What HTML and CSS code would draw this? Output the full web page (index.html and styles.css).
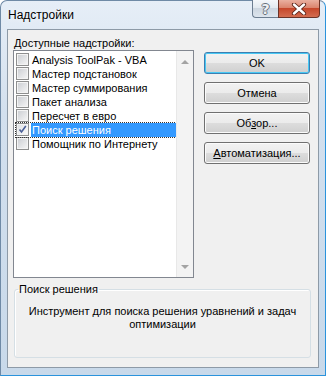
FILE: index.html
```html
<!DOCTYPE html>
<html lang="ru">
<head>
  <meta charset="UTF-8">
  <title>Надстройки</title>
  <link rel="stylesheet" href="styles.css">
</head>
<body>
  <div class="window">
    <div class="titlebar">
      <span class="title">Надстройки</span>
      <div class="caption-buttons">
        <span class="cap-btn help">?</span>
        <span class="cap-btn close">
          <svg width="16" height="12" viewBox="0 0 16 12">
            <path d="M3 1.5 L13 10.5 M13 1.5 L3 10.5" stroke="#5a2418" stroke-width="4.2" stroke-linecap="round"/>
            <path d="M3 1.5 L13 10.5 M13 1.5 L3 10.5" stroke="#fff" stroke-width="2.4" stroke-linecap="round"/>
          </svg>
        </span>
      </div>
    </div>

    <div class="client">
      <div class="main">
        <div class="addins">
          <div class="label"><u>Д</u>оступные надстройки:</div>
          <div class="listbox">
            <ul class="items">
              <li><span class="check"></span><span class="name">Analysis ToolPak - VBA</span></li>
              <li><span class="check"></span><span class="name">Мастер подстановок</span></li>
              <li><span class="check"></span><span class="name">Мастер суммирования</span></li>
              <li><span class="check"></span><span class="name">Пакет анализа</span></li>
              <li><span class="check"></span><span class="name">Пересчет в евро</span></li>
              <li class="selected"><span class="check checked">
                <svg width="9" height="9" viewBox="0 0 9 9"><path d="M1.5 4.5 L3.5 7 L7.8 1" fill="none" stroke="#4a5f97" stroke-width="1.6"/></svg>
              </span><span class="name">Поиск решения</span></li>
              <li><span class="check"></span><span class="name">Помощник по Интернету</span></li>
            </ul>
            <div class="scrollbar">
              <span class="arrow up"></span>
              <span class="arrow down"></span>
            </div>
          </div>
        </div>

        <div class="buttons">
          <button class="btn default">OK</button>
          <button class="btn">Отмена</button>
          <button class="btn">Об<u>з</u>ор...</button>
          <button class="btn"><u>А</u>втоматизация...</button>
        </div>
      </div>

      <fieldset class="group">
        <legend>Поиск решения</legend>
        <p class="description">Инструмент для поиска решения уравнений и задач оптимизации</p>
      </fieldset>
    </div>
  </div>
</body>
</html>
```

FILE: styles.css
```css
body { margin: 0; font-family: "Liberation Sans", Arial, sans-serif; font-size: 11px; color: #000; background: #fff; }

.window {
  width: 326px; height: 376px; box-sizing: border-box;
  display: flex; flex-direction: column;
  padding: 0 6px 7px 6px;
  border: 1px solid #6f8aa6; border-right-color: #2a93dc; border-bottom-color: #2a93dc;
  border-radius: 7px 7px 0 0;
  background: linear-gradient(#e6eef7, #d3e0ee 30%, #c8d9ea 100%);
}

.titlebar { height: 28px; display: flex; align-items: flex-start; }
.title { padding: 7px 0 0 1px; font-size: 12px; line-height: 14px; text-shadow: 0 0 6px #fff; }

.caption-buttons { margin-left: auto; margin-top: -1px; margin-right: -1px; display: flex; }
.cap-btn { height: 18px; box-sizing: border-box; display: flex; align-items: center; justify-content: center; }
.help {
  width: 26px; border: 1px solid #6c7d90; border-top: none; border-right: none; border-radius: 0 0 0 4px;
  background: linear-gradient(#f4f7fa, #e1e8ef 50%, #cdd6e0 50%, #dde5ee);
  font: bold 14px "DejaVu Sans", sans-serif; color: #eef1f4;
  text-shadow: 1px 0 #6a737d, -1px 0 #6a737d, 0 1px #6a737d, 0 -1px #6a737d;
}
.close {
  width: 42px; border: 1px solid #6b3327; border-top: none; border-radius: 0 0 4px 0;
  background: linear-gradient(#eab0a0, #d98068 50%, #c6472b 50%, #d36d50);
}

.client {
  flex: 1; display: flex; flex-direction: column;
  background: #f0f0f0; border: 1px solid #8d9aa7;
  padding: 6px 7px 8px 5px;
}

.main { display: flex; }
.label { margin-left: 1px; height: 14px; line-height: 14px; }

.listbox {
  width: 181px; height: 228px; box-sizing: border-box;
  border: 1px solid #828790; background: #fff; display: flex;
}
.items { list-style: none; margin: 0; padding: 2px 0 0 2px; flex: 1; }
.items li { display: flex; height: 14px; }
.check {
  width: 13px; height: 13px; box-sizing: border-box; flex: none;
  border: 1px solid #8e8f8f; background: linear-gradient(135deg, #c9ccd1, #f7f7f7);
  box-shadow: inset 0 0 0 1px #f4f4f4;
  display: flex; align-items: center; justify-content: center;
}
.check.checked { background: linear-gradient(135deg, #dfe1e4, #fafafa); }
.name { flex: 1; margin-left: 2px; padding-left: 1px; line-height: 14px; white-space: nowrap; }
.selected { outline: 1px dotted #333; outline-offset: 0; }
.selected .name { background: #3399ff; color: #fff; }

.scrollbar {
  width: 16px; background: #f3f3f3; border-left: 1px solid #e8e8e8;
  display: flex; flex-direction: column; justify-content: space-between; align-items: center;
  padding: 9px 0 8px;
}
.arrow { width: 0; height: 0; border-left: 4px solid transparent; border-right: 4px solid transparent; }
.arrow.up { border-bottom: 4px solid #a3a3a3; }
.arrow.down { border-top: 4px solid #a3a3a3; }

.buttons { margin-left: 10px; padding-top: 16px; display: flex; flex-direction: column; gap: 8px; }
.btn {
  width: 106px; height: 22px; padding: 0;
  font-family: "Liberation Sans", Arial, sans-serif; font-size: 11px; color: #000;
  border: 1px solid #707070; border-radius: 3px;
  background: linear-gradient(#f2f2f2, #ebebeb 50%, #dddddd 50%, #cfcfcf);
  box-shadow: inset 0 0 0 1px #fbfbfb;
}
.btn.default { border-color: #3c7fb1; box-shadow: inset 0 0 0 1px #48c8f4; }

.group {
  margin: 4px 0 0 1px; padding: 0 3px; height: 76px; box-sizing: border-box;
  border: 1px solid #d5dfe5; border-radius: 3px; box-shadow: inset 1px 1px #fff;
}
.group legend { padding: 0 1px; line-height: 14px; }
.description { margin: 9px 10px 0; text-align: center; line-height: 13px; }
```
